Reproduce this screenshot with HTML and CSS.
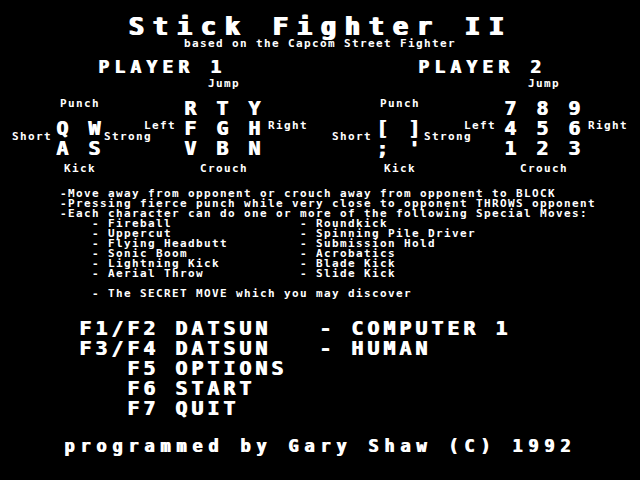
FILE: index.html
```html
<!DOCTYPE html>
<html lang="en">
<head>
<meta charset="utf-8">
<title>Stick Fighter II</title>
<link rel="stylesheet" href="styles.css">
</head>
<body>
<div class="screen">
  <header class="head">
    <h1 class="title">Stick Fighter II</h1>
    <p class="subtitle">based on the Capcom Street Fighter</p>
  </header>

  <section class="players">
    <div class="player">
      <h2 class="player-name">PLAYER 1</h2>
      <div class="pad">
        <span class="lbl jump">Jump</span>
        <span class="lbl punch">Punch</span>
        <span class="keys dir-top">R T Y</span>
        <span class="keys act-top">Q W</span>
        <span class="lbl left">Left</span>
        <span class="keys dir-mid">F G H</span>
        <span class="lbl right">Right</span>
        <span class="lbl short">Short</span>
        <span class="keys act-bot">A S</span>
        <span class="lbl strong">Strong</span>
        <span class="keys dir-bot">V B N</span>
        <span class="lbl kick">Kick</span>
        <span class="lbl crouch">Crouch</span>
      </div>
    </div>
    <div class="player">
      <h2 class="player-name">PLAYER 2</h2>
      <div class="pad">
        <span class="lbl jump">Jump</span>
        <span class="lbl punch">Punch</span>
        <span class="keys dir-top">7 8 9</span>
        <span class="keys act-top">[ ]</span>
        <span class="lbl left">Left</span>
        <span class="keys dir-mid">4 5 6</span>
        <span class="lbl right">Right</span>
        <span class="lbl short">Short</span>
        <span class="keys act-bot">; '</span>
        <span class="lbl strong">Strong</span>
        <span class="keys dir-bot">1 2 3</span>
        <span class="lbl kick">Kick</span>
        <span class="lbl crouch">Crouch</span>
      </div>
    </div>
  </section>

  <section class="help">
    <p class="tip">-Move away from opponent or crouch away from opponent to BLOCK</p>
    <p class="tip">-Pressing fierce punch while very close to opponent THROWS opponent</p>
    <p class="tip">-Each character can do one or more of the following Special Moves:</p>
    <ul class="moves">
      <li>- Fireball</li>
      <li>- Roundkick</li>
      <li>- Uppercut</li>
      <li>- Spinning Pile Driver</li>
      <li>- Flying Headbutt</li>
      <li>- Submission Hold</li>
      <li>- Sonic Boom</li>
      <li>- Acrobatics</li>
      <li>- Lightning Kick</li>
      <li>- Blade Kick</li>
      <li>- Aerial Throw</li>
      <li>- Slide Kick</li>
    </ul>
    <p class="secret">- The SECRET MOVE which you may discover</p>
  </section>

  <section class="menu">
    <span class="fkey">F1/F2</span><span class="fname">DATSUN</span><span class="fval">- COMPUTER 1</span>
    <span class="fkey">F3/F4</span><span class="fname">DATSUN</span><span class="fval">- HUMAN</span>
    <span class="fkey">F5</span><span class="fname">OPTIONS</span><span class="fval"></span>
    <span class="fkey">F6</span><span class="fname">START</span><span class="fval"></span>
    <span class="fkey">F7</span><span class="fname">QUIT</span><span class="fval"></span>
  </section>

  <footer class="credits">programmed by Gary Shaw (C) 1992</footer>
</div>
</body>
</html>
```

FILE: styles.css
```css
* {
  box-sizing: border-box;
}

html, body {
  margin: 0;
  padding: 0;
  background: #000;
}

.screen {
  width: 640px;
  height: 480px;
  overflow: hidden;
  background: #000;
  color: #fff;
  font-family: "DejaVu Sans Mono", "Liberation Mono", monospace;
  font-weight: bold;
  display: flex;
  flex-direction: column;
}

/* ---------- header ---------- */
.head {
  padding-top: 15px;
  text-align: center;
}

.title {
  margin: 0;
  font-size: 25px;
  line-height: 24px;
  letter-spacing: 8.95px;
  font-weight: bold;
  text-shadow: 1px 0 0 #fff, 2px 0 0 #fff;
}

.subtitle {
  margin: 0;
  font-size: 11px;
  line-height: 10px;
  letter-spacing: 1.378px;
}

/* ---------- players ---------- */
.players {
  margin-top: 10px;
  display: flex;
}

.player {
  width: 320px;
  display: flex;
  flex-direction: column;
}

.player-name {
  margin: 0;
  text-align: center;
  padding-left: 4px;
  font-size: 18px;
  line-height: 16px;
  letter-spacing: 5.164px;
  font-weight: bold;
  text-shadow: 1px 0 0 #fff;
}

.pad {
  display: grid;
  grid-template-columns: 56px 48px 80px 80px 56px;
  grid-template-rows: 23px 20px 20px 20px 16px;
}

.lbl {
  font-size: 11px;
  line-height: 10px;
  letter-spacing: 1.378px;
  white-space: pre;
  align-self: start;
}

.keys {
  font-size: 20px;
  line-height: 20px;
  letter-spacing: 3.96px;
  white-space: pre;
  align-self: start;
  text-shadow: 1px 0 0 #fff;
}

.jump    { grid-area: 1 / 4; justify-self: center; margin-top: 4px; }
.punch   { grid-area: 2 / 2; justify-self: center; margin-top: 1px; }
.dir-top { grid-area: 2 / 4; }
.act-top { grid-area: 3 / 2; }
.left    { grid-area: 3 / 3; justify-self: end; margin-top: 3px; padding-right: 8px; }
.dir-mid { grid-area: 3 / 4; }
.right   { grid-area: 3 / 5; margin-top: 3px; padding-left: 4px; }
.short   { grid-area: 4 / 1; justify-self: end; margin-top: -6px; padding-right: 4px; }
.act-bot { grid-area: 4 / 2; }
.strong  { grid-area: 4 / 3; margin-top: -6px; }
.dir-bot { grid-area: 4 / 4; }
.kick    { grid-area: 5 / 2; justify-self: center; margin-top: 6px; }
.crouch  { grid-area: 5 / 4; justify-self: center; margin-top: 6px; }

/* ---------- help text ---------- */
.help {
  margin-top: 15px;
  padding-left: 60px;
  font-size: 11px;
  line-height: 10px;
  letter-spacing: 1.378px;
}

.tip {
  margin: 0;
  white-space: pre;
}

.moves {
  list-style: none;
  margin: 0;
  padding: 0 0 0 32px;
  display: grid;
  grid-template-columns: 208px auto;
}

.moves li {
  white-space: pre;
}

.secret {
  margin: 10px 0 0;
  padding-left: 32px;
  white-space: pre;
}

/* ---------- menu ---------- */
.menu {
  margin-top: 19px;
  padding-left: 79px;
  display: grid;
  grid-template-columns: 80px 128px auto;
  column-gap: 16px;
  grid-auto-rows: 20px;
  font-size: 20px;
  line-height: 20px;
  letter-spacing: 3.96px;
  text-shadow: 1px 0 0 #fff;
}

.fkey {
  text-align: right;
  white-space: pre;
}

.fname, .fval {
  white-space: pre;
}

/* ---------- footer ---------- */
.credits {
  margin-top: 18px;
  text-align: center;
  font-size: 17px;
  line-height: 20px;
  letter-spacing: 5.766px;
  text-shadow: 1px 0 0 #fff;
}
```
